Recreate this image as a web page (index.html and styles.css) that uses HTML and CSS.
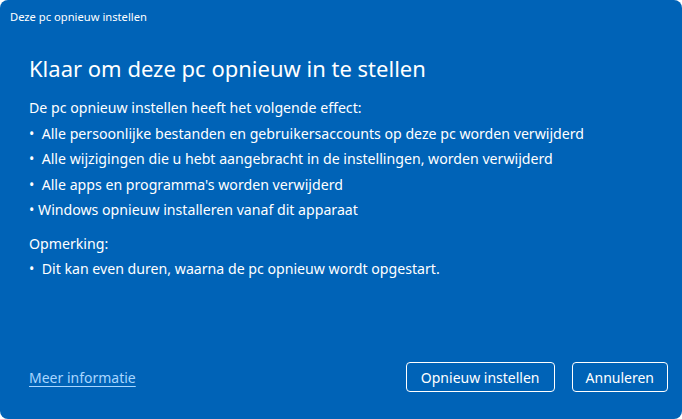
FILE: index.html
```html
<!DOCTYPE html>
<html lang="nl">
<head>
<meta charset="utf-8">
<title>Deze pc opnieuw instellen</title>
<link rel="stylesheet" href="styles.css">
</head>
<body>
<div class="dialog">
  <div class="titlebar">Deze pc opnieuw instellen</div>
  <div class="content">
    <h1 class="heading">Klaar om deze pc opnieuw in te stellen</h1>
    <p class="line">De pc opnieuw instellen heeft het volgende effect:</p>
    <p class="line">•&nbsp;&nbsp;Alle persoonlijke bestanden en gebruikersaccounts op deze pc worden verwijderd</p>
    <p class="line">•&nbsp;&nbsp;Alle wijzigingen die u hebt aangebracht in de instellingen, worden verwijderd</p>
    <p class="line">•&nbsp;&nbsp;Alle apps en programma's worden verwijderd</p>
    <p class="line">• Windows opnieuw installeren vanaf dit apparaat</p>
    <p class="line note">Opmerking:</p>
    <p class="line">•&nbsp;&nbsp;Dit kan even duren, waarna de pc opnieuw wordt opgestart.</p>
  </div>
  <div class="footer">
    <a class="link" href="#">Meer informatie</a>
    <div class="buttons">
      <button class="btn">Opnieuw instellen</button>
      <button class="btn btn-narrow">Annuleren</button>
    </div>
  </div>
</div>
</body>
</html>
```
FILE: styles.css
```css
html, body {
  margin: 0;
  padding: 0;
  background: #ffffff;
}
.dialog {
  width: 682px;
  height: 419px;
  background: #0063b7;
  border-radius: 8px;
  color: #ffffff;
  font-family: "Noto Sans", "Open Sans", sans-serif;
  display: flex;
  flex-direction: column;
  box-sizing: border-box;
}
.titlebar {
  font-size: 11.2px;
  padding: 9px 0 0 10px;
  height: 24px;
  box-sizing: border-box;
}
.content {
  padding: 28px 0 0 29px;
  flex: 1;
}
.heading {
  font-size: 22px;
  font-weight: 400;
  margin: 0 0 11px 0;
  line-height: 32px;
}
.line {
  font-size: 14.15px;
  margin: 0;
  line-height: 25.5px;
}
.note {
  margin-top: 8px;
}
.footer {
  display: flex;
  justify-content: space-between;
  align-items: center;
  padding: 0 14px 27px 29px;
}
.link {
  color: #a8d6ff;
  font-size: 14px;
  text-decoration: underline;
  text-underline-offset: 3px;
}
.buttons {
  display: flex;
  gap: 17px;
}
.btn {
  background: transparent;
  color: #ffffff;
  border: 1.5px solid #ffffff;
  border-radius: 4px;
  font-family: inherit;
  font-size: 14px;
  height: 30px;
  padding: 0 14px;
}
.btn-narrow {
  padding: 0 13px;
}
```
